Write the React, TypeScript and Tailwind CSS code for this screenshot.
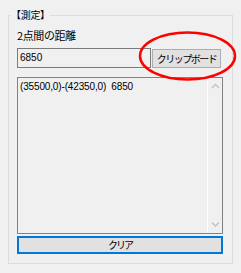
import React from "react";

const jp = '"Noto Sans CJK JP", "Liberation Sans", sans-serif';
const num = '"Liberation Sans", "Noto Sans CJK JP", sans-serif';

function Chevron({ down }: { down?: boolean }) {
  return (
    <svg width="9" height="6" viewBox="0 0 9 6" className="block">
      <path
        d={down ? "M1 1.5 L4.5 5 L8 1.5" : "M1 5 L4.5 1.5 L8 5"}
        fill="none"
        stroke="#c2c2c2"
        strokeWidth="1.4"
      />
    </svg>
  );
}

export default function App() {
  return (
    <div className="relative w-[241px] h-[273px] bg-[#f0f0f0] pt-[15px] pl-[8px] overflow-hidden text-black">
      <div className="relative w-[225px] h-[249px] border border-[#dcdcdc] pl-[8px] flex flex-col">
        <div
          className="absolute left-[2px] top-[-8px] bg-[#f0f0f0] text-[10px] leading-[14px] tracking-[-0.3px]"
          style={{ fontFamily: jp }}
        >
          【測定】
        </div>
        <div
          className="mt-[12px] text-[11px] leading-[14px] tracking-[-0.4px]"
          style={{ fontFamily: jp }}
        >
          2点間の距離
        </div>
        <div className="mt-[6px] flex items-start">
          <div
            className="w-[134px] h-[20px] border border-[#7a7a7a] bg-[#f0f0f0] pl-[2px] flex items-center text-[10px] leading-[12px]"
            style={{ fontFamily: num }}
          >
            6850
          </div>
          <div
            className="ml-[1px] mt-[1px] w-[69px] h-[19px] border border-[#adadad] bg-[#e1e1e1] flex items-center justify-center text-[10px] leading-[12px] tracking-[-1.5px]"
            style={{ fontFamily: jp }}
          >
            クリップボード
          </div>
        </div>
        <div className="mt-[9px] w-[206px] h-[157px] border border-[#828282] bg-[#f0f0f0] flex">
          <div
            className="flex-1 pl-[2px] pt-[2px] text-[10px] leading-[13px] whitespace-pre tracking-[-0.15px]"
            style={{ fontFamily: num }}
          >
            (35500,0)-(42350,0)  6850
          </div>
          <div className="w-[15px] border-l border-white flex flex-col items-center justify-between pt-[5px] pb-[6px]">
            <Chevron />
            <Chevron down />
          </div>
        </div>
        <div
          className="mt-[2px] w-[206px] h-[18px] border-2 border-[#0078d7] bg-[#e1e1e1] flex items-center justify-center text-[10px] leading-[12px] tracking-[-2px]"
          style={{ fontFamily: jp }}
        >
          クリア
        </div>
      </div>
      <svg
        className="absolute left-[138px] top-[31px]"
        width="99"
        height="50"
        viewBox="0 0 99 50"
      >
        <ellipse cx="49.5" cy="25" rx="47.5" ry="23.5" fill="none" stroke="#ff0000" strokeWidth="2.5" />
      </svg>
    </div>
  );
}
